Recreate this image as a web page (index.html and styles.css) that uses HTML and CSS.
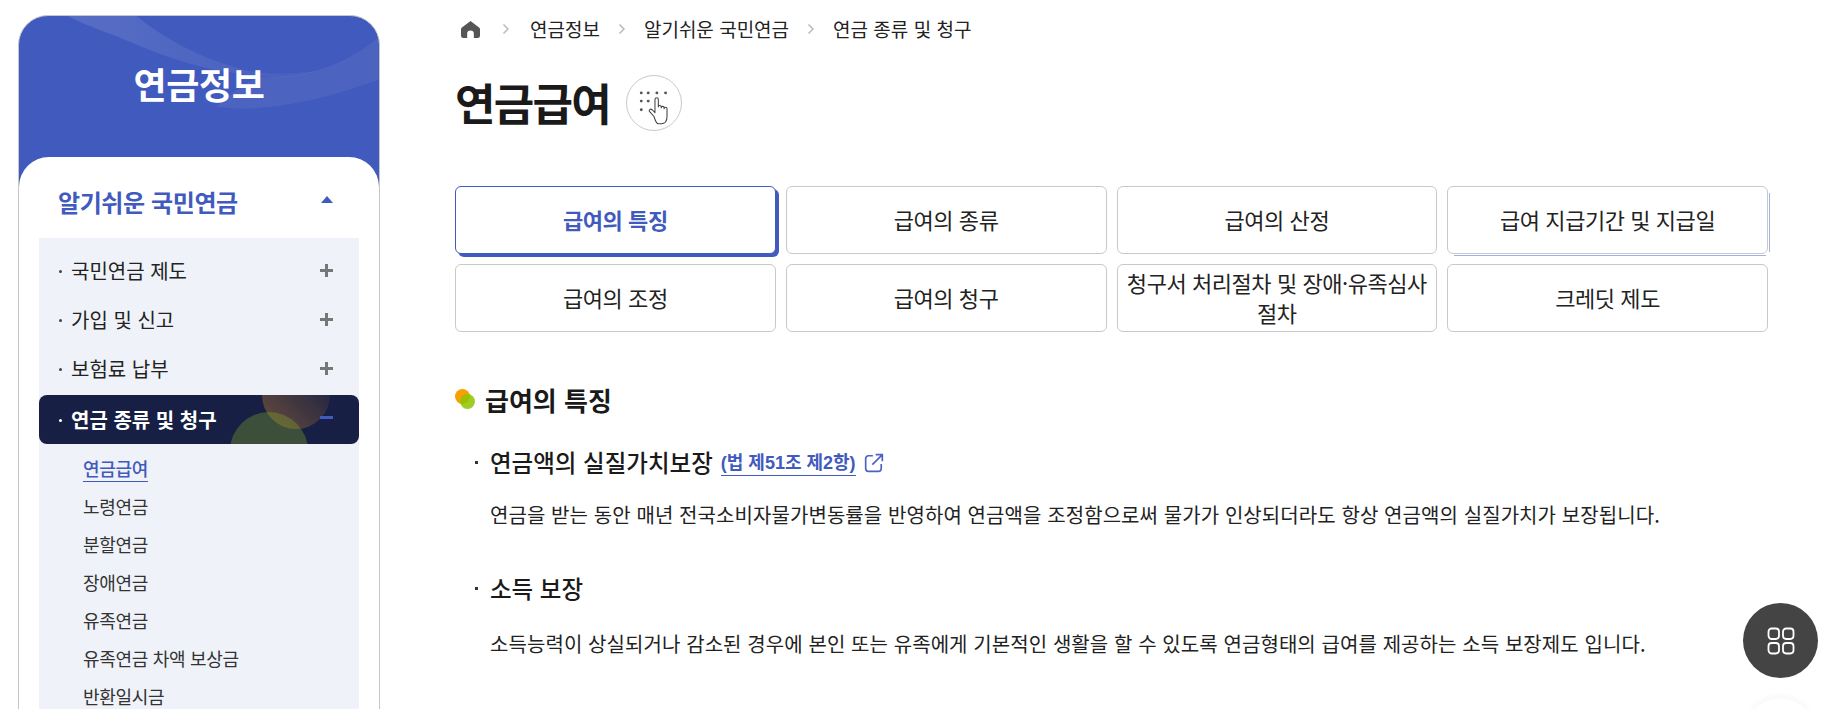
FILE: index.html
```html
<!DOCTYPE html>
<html lang="ko">
<head>
<meta charset="utf-8">
<title>연금급여</title>
<link rel="stylesheet" href="styles.css">
</head>
<body>
<div class="page">
  <aside class="sidebar">
    <div class="side-head">
      <svg class="side-wave" viewBox="0 0 362 142" aria-hidden="true">
        <defs>
          <linearGradient id="bandFade" x1="0" x2="1" y1="0" y2="0"><stop offset="0" stop-color="#fff" stop-opacity=".12"/><stop offset="1" stop-color="#fff" stop-opacity=".03"/></linearGradient>
        </defs>
        <path d="M49 0H118C150 26 190 46 234 56C260 60 285 58 303 54C285 62 265 63 248 61C195 57 155 45 114 27C90 17 68 10 49 0Z" fill="url(#bandFade)"/>
        <path d="M362 21C345 36 325 47 303 54C285 60 262 62 240 62C225 68 212 80 198 91C215 94 232 94 248 92C290 88 330 76 362 64Z" fill="#fff" fill-opacity=".06"/>
      </svg>
      <h2 class="side-title">연금정보</h2>
    </div>
    <div class="side-panel">
      <div class="side-section">
        <span>알기쉬운 국민연금</span>
        <i class="tri"></i>
      </div>
      <ul class="nav">
        <li class="nav-item"><span class="nav-label">국민연금 제도</span><i class="plus"></i></li>
        <li class="nav-item"><span class="nav-label">가입 및 신고</span><i class="plus"></i></li>
        <li class="nav-item"><span class="nav-label">보험료 납부</span><i class="plus"></i></li>
        <li class="nav-item active"><span class="nav-label">연금 종류 및 청구</span><i class="minus"></i></li>
      </ul>
      <ul class="subnav">
        <li class="current"><a>연금급여</a></li>
        <li><a>노령연금</a></li>
        <li><a>분할연금</a></li>
        <li><a>장애연금</a></li>
        <li><a>유족연금</a></li>
        <li><a>유족연금 차액 보상금</a></li>
        <li><a>반환일시금</a></li>
      </ul>
    </div>
  </aside>
  <main class="main">
    <nav class="crumbs">
      <svg class="home" viewBox="0 0 20 20" aria-hidden="true"><path d="M10 1 19 7.800C19.600 8.300 20 9 20 9.800V16.500A2.500 2.500 0 0 1 17.500 19H13.500V14.500A3.500 3.500 0 0 0 6.500 14.500V19H2.500A2.500 2.500 0 0 1 0 16.500V9.800C0 9 .4 8.300 1 7.800Z" fill="#555"/></svg>
      <svg class="chev first" viewBox="0 0 8 12" aria-hidden="true"><path d="M1.500 1.500 6 6l-4.500 4.500" fill="none" stroke="#bbb" stroke-width="1.500"/></svg>
      <span>연금정보</span>
      <svg class="chev" viewBox="0 0 8 12" aria-hidden="true"><path d="M1.500 1.500 6 6l-4.500 4.500" fill="none" stroke="#bbb" stroke-width="1.500"/></svg>
      <span>알기쉬운 국민연금</span>
      <svg class="chev" viewBox="0 0 8 12" aria-hidden="true"><path d="M1.500 1.500 6 6l-4.500 4.500" fill="none" stroke="#bbb" stroke-width="1.500"/></svg>
      <span>연금 종류 및 청구</span>
    </nav>
    <div class="title-row">
      <h1 class="title">연금급여</h1>
      <span class="braille">
        <svg viewBox="0 0 56 56" aria-hidden="true">
          <g fill="#555">
            <circle cx="14.800" cy="17.500" r="1.500"/><circle cx="22" cy="17.500" r="1.500"/><circle cx="31" cy="17.500" r="1.500"/><circle cx="40" cy="17.500" r="1.500"/>
            <circle cx="14.800" cy="26" r="1.500"/><circle cx="22" cy="26" r="1.500"/><circle cx="14.800" cy="35" r="1.500"/>
          </g>
          <path transform="translate(2 4)" d="M26 38 21.500 33c-1.500-1.700 1-3.500 2.600-2l2.900 3V20.500c0-2.600 3.500-2.600 3.500 0V28c0-2 3-2 3 0v1c0-2 3-2 3 0v1c0-2 3-2 3 0v8c0 5-2.500 7.500-6 7.500h-3C28 45.500 27 41 26 38Z" fill="#fff" stroke="#444" stroke-width="1.100" stroke-linejoin="round"/>
        </svg>
      </span>
    </div>
    <div class="tabs">
      <a class="tab selected">급여의 특징</a>
      <a class="tab">급여의 종류</a>
      <a class="tab">급여의 산정</a>
      <a class="tab fading">급여 지급기간 및 지급일</a>
      <a class="tab">급여의 조정</a>
      <a class="tab">급여의 청구</a>
      <a class="tab">청구서 처리절차 및 장애·유족심사 절차</a>
      <a class="tab">크레딧 제도</a>
    </div>
    <h2 class="section"><i class="dots"></i>급여의 특징</h2>
    <section class="block">
      <h3 class="point">연금액의 실질가치보장 <a class="law">(법 제51조 제2항)</a>
        <svg class="ext" viewBox="0 0 18 18" aria-hidden="true"><path d="M8 2.500H4A2.500 2.500 0 0 0 1.500 5v9A2.500 2.500 0 0 0 4 16.500h9a2.500 2.500 0 0 0 2.500-2.500v-4M10.500 1.500h6v6M16.300 1.700 7.500 10.500" fill="none" stroke="#4a63c4" stroke-width="1.500"/></svg>
      </h3>
      <p class="body">연금을 받는 동안 매년 전국소비자물가변동률을 반영하여 연금액을 조정함으로써 물가가 인상되더라도 항상 연금액의 실질가치가 보장됩니다.</p>
    </section>
    <section class="block">
      <h3 class="point">소득 보장</h3>
      <p class="body">소득능력이 상실되거나 감소된 경우에 본인 또는 유족에게 기본적인 생활을 할 수 있도록 연금형태의 급여를 제공하는 소득 보장제도 입니다.</p>
    </section>
  </main>
</div>
<button class="fab" aria-label="메뉴">
  <svg viewBox="0 0 28 28" aria-hidden="true"><g fill="none" stroke="#fff" stroke-width="1.800"><rect x="1.500" y="1.500" width="10.500" height="10.500" rx="3.200"/><rect x="16" y="1.500" width="10.500" height="10.500" rx="3.200"/><rect x="1.500" y="16" width="10.500" height="10.500" rx="3.200"/><rect x="16" y="16" width="10.500" height="10.500" rx="3.200"/></g></svg>
</button>
<div class="fab-ghost"></div>
</body>
</html>
```
FILE: styles.css
```css
* { box-sizing: border-box; }
html, body { margin: 0; padding: 0; height: 709px; overflow: hidden; background: #fff; }
body { font-family: "Noto Sans CJK KR", "Noto Sans", sans-serif; color: #1a1a1a; }
h1, h2, h3, p, ul { margin: 0; padding: 0; }
ul { list-style: none; }
.page { display: flex; gap: 75px; padding: 15px 57px 0 18px; height: 709px; overflow: hidden; }

.sidebar { width: 362px; flex: none; border: 1px solid #c6c6c6; border-radius: 30px 30px 0 0; background: #415abd; height: 900px; overflow: hidden; }
.side-head { position: relative; height: 141px; display: flex; justify-content: center; padding-top: 41px; overflow: hidden; }
.side-wave { position: absolute; inset: 0; width: 100%; height: 100%; }
.side-title { position: relative; font-size: 36px; line-height: 52px; height: 52px; font-weight: 700; color: #fff; letter-spacing: -.4px; }
.side-panel { background: #fff; border-radius: 30px 30px 0 0; padding: 0 20px; height: 760px; }
.side-section { display: flex; justify-content: space-between; align-items: center; height: 81px; padding: 7px 26px 0 19px; font-size: 24px; font-weight: 700; color: #415abd; letter-spacing: -.4px; }
.tri { width: 0; height: 0; border-left: 6px solid transparent; border-right: 6px solid transparent; border-bottom: 7px solid #415abd; margin-top: -3px; }

.nav { background: #eff2f8; padding-top: 8px; }
.nav-item { position: relative; display: flex; justify-content: space-between; align-items: center; height: 49px; padding: 0 26px 0 32px; font-size: 20px; color: #222; }
.nav-label { position: relative; z-index: 1; }
.nav-label::before { content: ""; position: absolute; left: -12px; top: 50%; width: 3px; height: 3px; border-radius: 50%; background: #444; margin-top: -1px; }
.nav-item.active { margin-top: 2px; border-radius: 8px; color: #fff; font-weight: 700; background-color: #171f45; overflow: hidden; }
.nav-item.active::before { content: ""; position: absolute; left: 223px; top: -34px; width: 68px; height: 68px; border-radius: 50%; background: linear-gradient(45deg, rgba(210, 135, 45, .44), rgba(210, 135, 45, .03) 85%); }
.nav-item.active::after { content: ""; position: absolute; left: 191px; top: 17px; width: 78px; height: 78px; border-radius: 50%; background: rgba(125, 165, 40, .36); }
.nav-item.active .nav-label::before { background: #fff; }
.plus, .minus { position: relative; z-index: 1; width: 13px; height: 13px; display: block; }
.plus::before, .minus::before { content: ""; position: absolute; left: 0; right: 0; top: 5px; height: 3px; background: #777; }
.plus::after { content: ""; position: absolute; top: 0; bottom: 0; left: 5px; width: 3px; background: #777; }
.minus { margin-top: -5px; }
.minus::before { background: #415abd; }

.subnav { background: #eff2f8; padding: 5px 0 0 44px; height: 400px; }
.subnav li { height: 38px; display: flex; align-items: center; font-size: 18px; color: #333; letter-spacing: -.3px; }
.subnav a { display: block; line-height: 26px; }
.subnav .current { font-weight: 500; color: #415abd; }
.subnav .current a { border-bottom: 1px solid #415abd; }

.main { flex: 1; min-width: 0; }
.crumbs { display: flex; align-items: center; height: 27px; font-size: 19px; color: #222; }
.home { width: 19px; height: 19px; margin-left: 6px; margin-top: 2px; flex: none; }
.chev { width: 8px; height: 12px; margin: 0 18px; flex: none; }
.chev.first { margin: 0 20px 0 22px; }
.title-row { display: flex; align-items: center; gap: 16px; margin-top: 32px; height: 58px; }
.title { font-size: 44px; font-weight: 700; letter-spacing: -1.700px; line-height: 58px; color: #1a1a1a; margin-top: -3px; }
.braille { width: 56px; height: 56px; border: 1px solid #c9c9c9; border-radius: 50%; display: block; }
.braille svg { width: 100%; height: 100%; display: block; }

.tabs { display: grid; grid-template-columns: repeat(4, 1fr); grid-auto-rows: 68px; gap: 10px; margin-top: 54px; }
.tab { position: relative; display: flex; align-items: center; justify-content: center; text-align: center; padding: 0 6px 3px; border: 1px solid #c9c9c9; border-radius: 6px; font-size: 22px; letter-spacing: -.44px; line-height: 30px; color: #222; background: #fff; }
.tab.selected { border-color: #415abd; color: #415abd; font-weight: 700; box-shadow: 3px 3px 0 #415abd; }
.tab.fading::before { content: ""; position: absolute; right: -3px; top: 6px; bottom: 1px; width: 1px; background: #a3b0e6; }
.tab.fading::after { content: ""; position: absolute; left: 6px; right: 1px; bottom: -3px; height: 1px; background: #a3b0e6; }

.section { display: flex; align-items: center; margin-top: 47px; height: 40px; font-size: 26px; font-weight: 700; color: #1a1a1a; }
.dots { position: relative; width: 20px; height: 20px; margin-right: 10px; display: block; flex: none; }
.dots::before { content: ""; position: absolute; left: 0; top: 0; width: 15px; height: 15px; border-radius: 50%; background: #f7a100; }
.dots::after { content: ""; position: absolute; left: 5px; top: 5px; width: 15px; height: 15px; border-radius: 50%; background: rgba(141, 197, 0, .85); }

.block { padding-left: 35px; margin-top: 26px; }
.block + .block { margin-top: 41px; }
.point { position: relative; display: flex; align-items: center; gap: 8px; font-size: 23.500px; font-weight: 500; line-height: 34px; color: #1a1a1a; }
.point::before { content: ""; position: absolute; left: -15px; top: 16px; width: 3px; height: 3px; background: #333; }
.law { font-family: "Liberation Sans", "Noto Sans CJK KR", sans-serif; font-size: 18px; font-weight: 700; color: #415abd; border-bottom: 1px solid #415abd; line-height: 24px; margin-top: 2px; }
.ext { width: 20px; height: 20px; margin-top: 2px; }
.body { margin-top: 21px; font-size: 20px; letter-spacing: .08px; line-height: 30px; color: #222; }
.block + .block .body { margin-top: 24px; }

.fab { position: fixed; left: 1743px; top: 603px; width: 75px; height: 75px; border: 0; border-radius: 50%; background: #444; padding: 0; display: flex; align-items: center; justify-content: center; }
.fab svg { width: 28px; height: 28px; }
.fab-ghost { position: fixed; left: 1745px; top: 698px; width: 70px; height: 70px; border-radius: 50%; background: #fff; box-shadow: 0 0 10px rgba(0,0,0,.06); }
```
